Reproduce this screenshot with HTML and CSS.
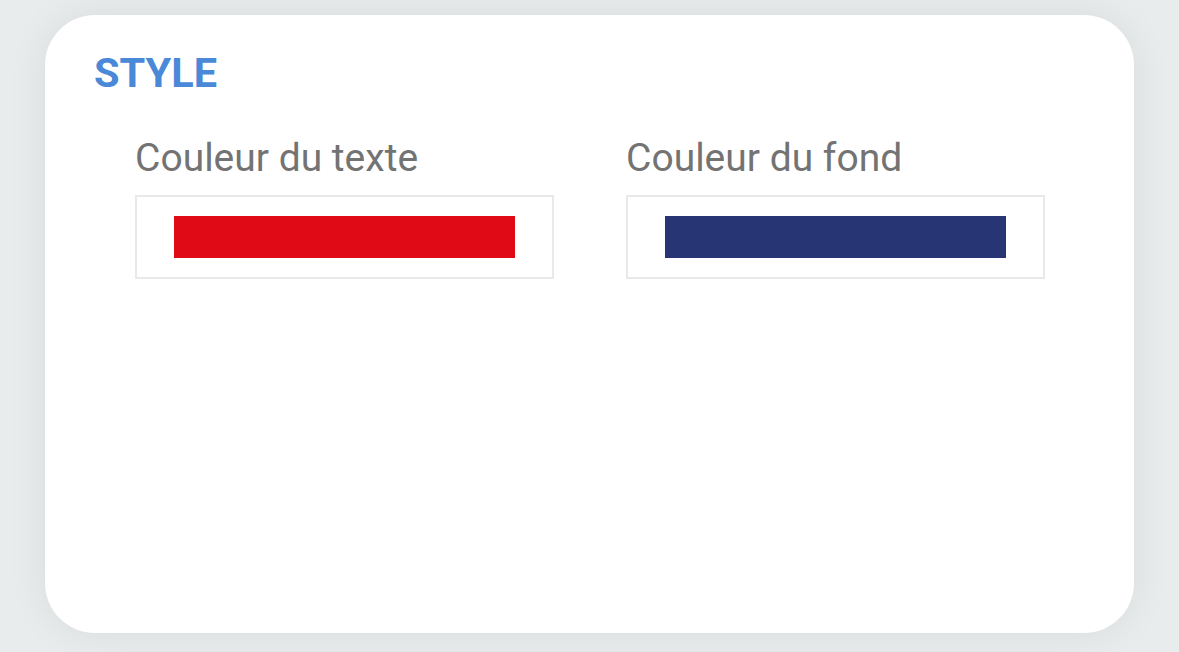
FILE: index.html
```html
<!DOCTYPE html>
<html lang="fr">
<head>
<meta charset="utf-8">
<title>Style</title>
<link rel="stylesheet" href="styles.css">
</head>
<body>
<div class="card">
  <h2 class="title">STYLE</h2>
  <div class="fields">
    <div class="field">
      <div class="label">Couleur du texte</div>
      <div class="picker"><div class="swatch swatch-red"></div></div>
    </div>
    <div class="field">
      <div class="label">Couleur du fond</div>
      <div class="picker"><div class="swatch swatch-blue"></div></div>
    </div>
  </div>
</div>
</body>
</html>
```

FILE: styles.css
```css
html, body {
  margin: 0;
  padding: 0;
}
body {
  background: #e8ecec;
  font-family: Roboto, "Liberation Sans", sans-serif;
  width: 1179px;
  height: 652px;
  overflow: hidden;
  padding: 15px 45px;
  box-sizing: border-box;
}
.card {
  background: #ffffff;
  border-radius: 50px;
  height: 618px;
  box-sizing: border-box;
  padding: 33px 0 0 0;
  box-shadow: 0 0 40px rgba(0, 0, 0, 0.07);
}
.title {
  margin: 0 0 0 49px;
  font-size: 41.5px;
  font-weight: 700;
  line-height: 49px;
  color: #4a88d8;
}
.fields {
  display: flex;
  gap: 72px;
  margin-top: 38px;
  padding-left: 90px;
}
.field {
  width: 419px;
  display: flex;
  flex-direction: column;
}
.label {
  font-size: 39px;
  line-height: normal;
  color: #737373;
  margin-bottom: 14px;
}
.picker {
  border: 2px solid #e9e9e9;
  padding: 19px 37px;
  height: 84px;
  box-sizing: border-box;
}
.swatch {
  height: 42px;
}
.swatch-red { background: #e00a16; }
.swatch-blue { background: #273574; }
```
